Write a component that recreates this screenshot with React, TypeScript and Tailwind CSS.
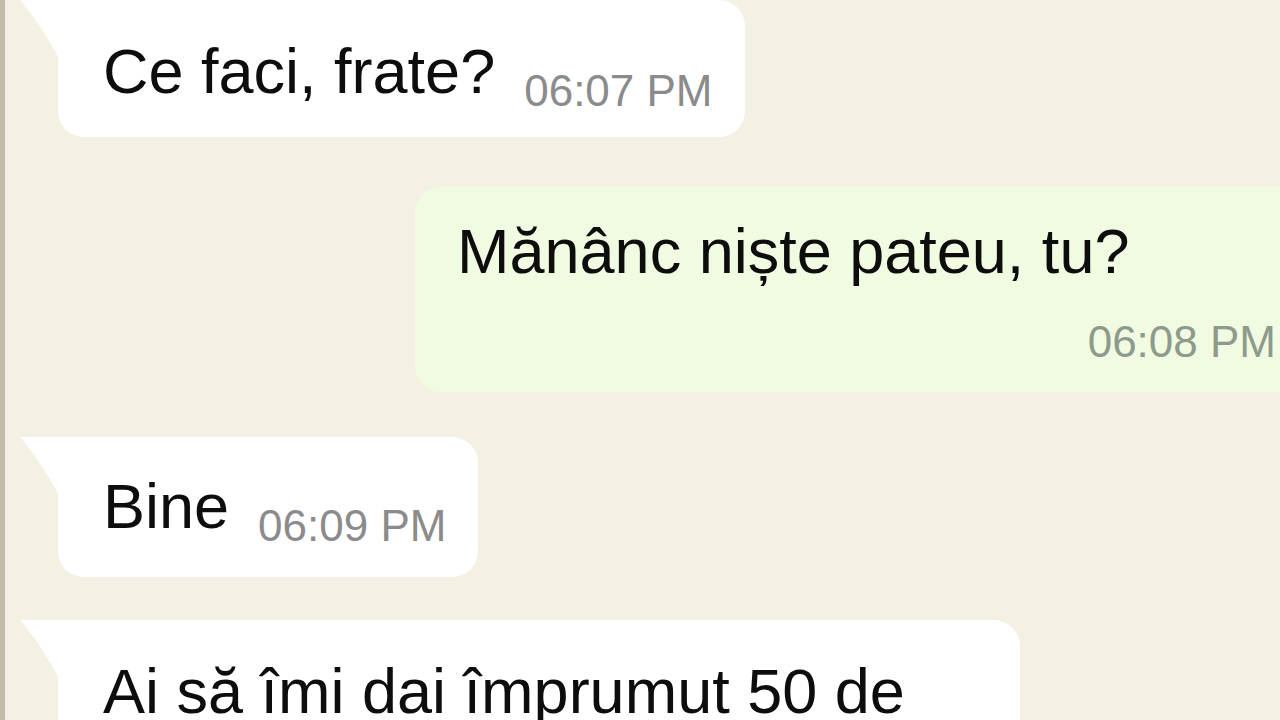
import React from "react";

type Received = {
  text: string;
  time?: string;
  width: string;
  spacing: string;
};

const font = { fontFamily: '"Liberation Sans", Arial, sans-serif' };

const Tail = () => (
  <svg
    className="absolute left-[-38px] top-0"
    width="40"
    height="60"
    viewBox="0 0 40 60"
  >
    <path d="M40 0 L0 0 C12 14 26 34 40 60 Z" fill="#ffffff" />
  </svg>
);

const ReceivedBubble: React.FC<Received> = ({ text, time, width, spacing }) => (
  <div
    className={`relative ml-[53px] self-start rounded-[26px] rounded-tl-none bg-white pl-[45px] ${width} ${spacing}`}
  >
    <Tail />
    <div className="flex items-baseline">
      <span className="whitespace-nowrap text-[63px] leading-none text-[#0d0d0d]">
        {text}
      </span>
      {time && (
        <span className="ml-[29px] translate-y-[13px] whitespace-nowrap text-[44px] leading-none text-[#8b8b8b]">
          {time}
        </span>
      )}
    </div>
  </div>
);

export default function App() {
  return (
    <div
      style={font}
      className="h-[720px] w-[1280px] overflow-hidden border-l-[5px] border-[#c2bbab] bg-[#f4f0e3]"
    >
      <div className="flex flex-col">
        <ReceivedBubble
          text="Ce faci, frate?"
          time="06:07 PM"
          width="w-[687px]"
          spacing="pt-[40px] pb-[34px]"
        />

        {/* sent */}
        <div className="ml-[410px] mt-[50px] w-[885px] rounded-[26px] bg-[#f0fbe2] pb-[28px] pl-[42px] pr-[24px] pt-[33px]">
          <div className="whitespace-nowrap text-[63px] leading-none text-[#0d0d0d]">
            Mănânc niște pateu, tu?
          </div>
          <div className="mt-[37px] text-right text-[44px] leading-none text-[#8e9a8b]">
            06:08 PM
          </div>
        </div>

        <div className="mt-[45px] flex">
          <ReceivedBubble
            text="Bine"
            time="06:09 PM"
            width="w-[420px]"
            spacing="pt-[38px] pb-[39px]"
          />
        </div>

        <div className="mt-[43px] flex">
          <ReceivedBubble
            text="Ai să îmi dai împrumut 50 de"
            width="w-[962px]"
            spacing="pt-[40px] pb-[60px]"
          />
        </div>
      </div>
    </div>
  );
}
